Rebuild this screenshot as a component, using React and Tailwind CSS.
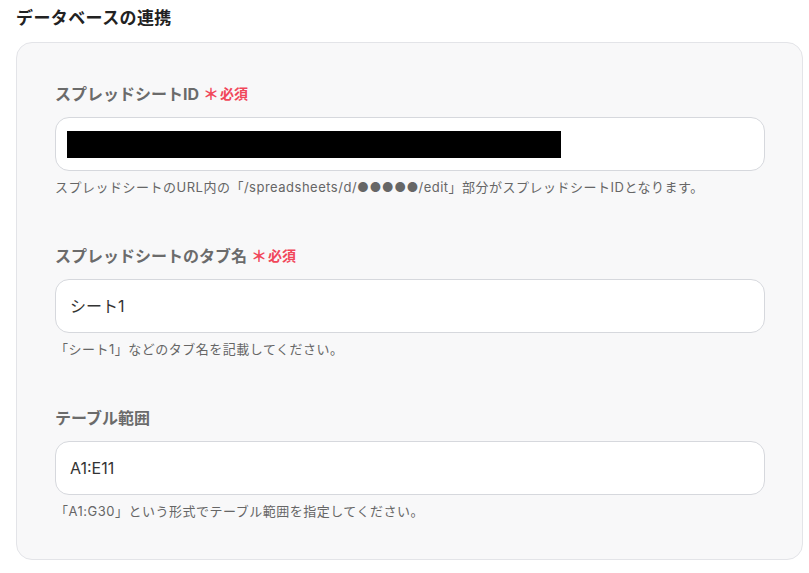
import React from 'react';

const fields = [
  {
    label: 'スプレッドシートID',
    required: true,
    value: null,
    help: 'スプレッドシートのURL内の「/spreadsheets/d/●●●●●/edit」部分がスプレッドシートIDとなります。',
  },
  {
    label: 'スプレッドシートのタブ名',
    required: true,
    value: 'シート1',
    help: '「シート1」などのタブ名を記載してください。',
  },
  {
    label: 'テーブル範囲',
    required: false,
    value: 'A1:E11',
    help: '「A1:G30」という形式でテーブル範囲を指定してください。',
  },
];

const Field = ({ field }) => (
  <div className="flex flex-col">
    {/* Label */}
    <div className="flex items-center h-[20px]">
      <span className="text-[16px] font-bold text-[#6b6b6b] leading-[20px]">{field.label}</span>
      {field.required && (
        <>
          <span className="ml-[4px] text-[16px] font-bold text-[#f1475a] leading-[20px]">＊</span>
          <span className="ml-[1px] text-[14px] font-bold text-[#f1475a] leading-[20px]">必須</span>
        </>
      )}
    </div>

    {/* Input */}
    <div className="mt-[13px] h-[54px] bg-white border border-[#d6d8dd] rounded-[14px] flex items-center px-[11px]">
      {field.value === null ? (
        <div className="w-[494px] h-[27px] bg-black" />
      ) : (
        <span className="pl-[3px] text-[16px] text-[#333333]">{field.value}</span>
      )}
    </div>

    {/* Help text */}
    <p className="mt-[7px] text-[13px] text-[#666666] leading-[18px] tracking-[0.5px]">{field.help}</p>
  </div>
);

export default function App() {
  return (
    <div
      className="w-[809px] h-[573px] bg-white px-[16px] pt-[6px]"
      style={{ fontFamily: "Inter, 'Noto Sans CJK JP', sans-serif" }}
    >
      {/* Header */}
      <h2 className="text-[17px] font-bold text-[#222222] leading-[24px] tracking-[0.4px]">データベースの連携</h2>

      {/* Panel */}
      <div className="mt-[12px] w-[787px] h-[518px] bg-[#f8f8f9] border border-[#e3e4e8] rounded-[16px] pl-[38px] pr-[37px] pt-[41px] flex flex-col gap-[50px]">
        {fields.map((f) => (
          <Field key={f.label} field={f} />
        ))}
      </div>
    </div>
  );
}
